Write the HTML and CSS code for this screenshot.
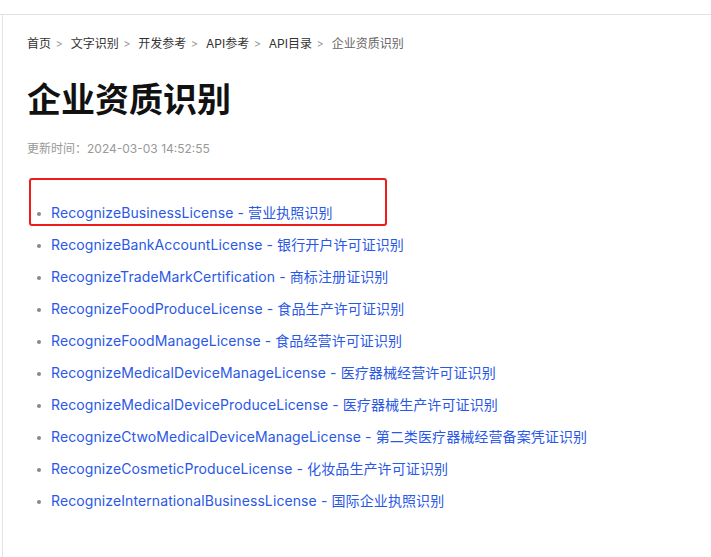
FILE: index.html
```html
<!DOCTYPE html>
<html lang="zh-CN">
<head>
  <meta charset="UTF-8">
  <title>企业资质识别</title>
  <link rel="stylesheet" href="styles.css">
</head>
<body>
  <div class="page">
    <div class="content">
      <!-- 面包屑 -->
      <div class="crumbs">
        <a href="#">首页</a><span class="sep">&gt;</span>
        <a href="#">文字识别</a><span class="sep">&gt;</span>
        <a href="#">开发参考</a><span class="sep">&gt;</span>
        <a href="#">API参考</a><span class="sep">&gt;</span>
        <a href="#">API目录</a><span class="sep">&gt;</span>
        <span class="current">企业资质识别</span>
      </div>

      <h1>企业资质识别</h1>
      <div class="updated">更新时间：2024-03-03 14:52:55</div>

      <div class="list-wrap">
        <div class="mark"></div>
        <ul class="api-list">
          <li><a href="#">RecognizeBusinessLicense - 营业执照识别</a></li>
          <li><a href="#">RecognizeBankAccountLicense - 银行开户许可证识别</a></li>
          <li><a href="#">RecognizeTradeMarkCertification - 商标注册证识别</a></li>
          <li><a href="#">RecognizeFoodProduceLicense - 食品生产许可证识别</a></li>
          <li><a href="#">RecognizeFoodManageLicense - 食品经营许可证识别</a></li>
          <li><a href="#">RecognizeMedicalDeviceManageLicense - 医疗器械经营许可证识别</a></li>
          <li><a href="#">RecognizeMedicalDeviceProduceLicense - 医疗器械生产许可证识别</a></li>
          <li><a href="#">RecognizeCtwoMedicalDeviceManageLicense - 第二类医疗器械经营备案凭证识别</a></li>
          <li><a href="#">RecognizeCosmeticProduceLicense - 化妆品生产许可证识别</a></li>
          <li><a href="#">RecognizeInternationalBusinessLicense - 国际企业执照识别</a></li>
        </ul>
      </div>
    </div>
  </div>
</body>
</html>
```

FILE: styles.css
```css
body {
  margin: 0;
  font-family: Inter, "Noto Sans CJK SC", sans-serif;
  color: #000;
  background: #fff;
}
.page {
  margin-top: 14px;
  border-top: 1px solid #e3e3e3;
}
.content {
  margin-left: 2px;
  border-left: 1px solid #e3e3e3;
  padding: 19px 0 0 24px;
  min-height: 530px;
}
.crumbs {
  font-size: 12px;
  line-height: 20px;
  color: #333;
}
.crumbs a {
  color: #333;
  text-decoration: none;
}
.crumbs .sep {
  color: #999;
  margin: 0 4.5px;
  font-size: 11px;
}
.crumbs .current {
  color: #666;
}
h1 {
  margin: 22px 0 0;
  font-size: 34px;
  line-height: 48px;
  font-weight: 600;
  color: #111;
}
.updated {
  margin-top: 15px;
  font-size: 12px;
  line-height: 20px;
  color: #999;
}
.list-wrap {
  position: relative;
  margin-top: 19px;
}
.mark {
  position: absolute;
  left: 2px;
  top: 0;
  width: 354px;
  height: 44px;
  border: 2px solid #f01c1c;
  border-radius: 3px;
}
.api-list {
  margin: 0;
  padding: 25px 0 0 24px;
  list-style: none;
}
.api-list li {
  position: relative;
  font-size: 14px;
  line-height: 20px;
  margin-bottom: 12px;
  letter-spacing: 0.1px;
}
.api-list li::before {
  content: "";
  position: absolute;
  left: -14px;
  top: 9px;
  width: 4px;
  height: 4px;
  border-radius: 50%;
  background: #888;
}
.api-list a {
  color: #2a58e6;
  text-decoration: none;
}
```
